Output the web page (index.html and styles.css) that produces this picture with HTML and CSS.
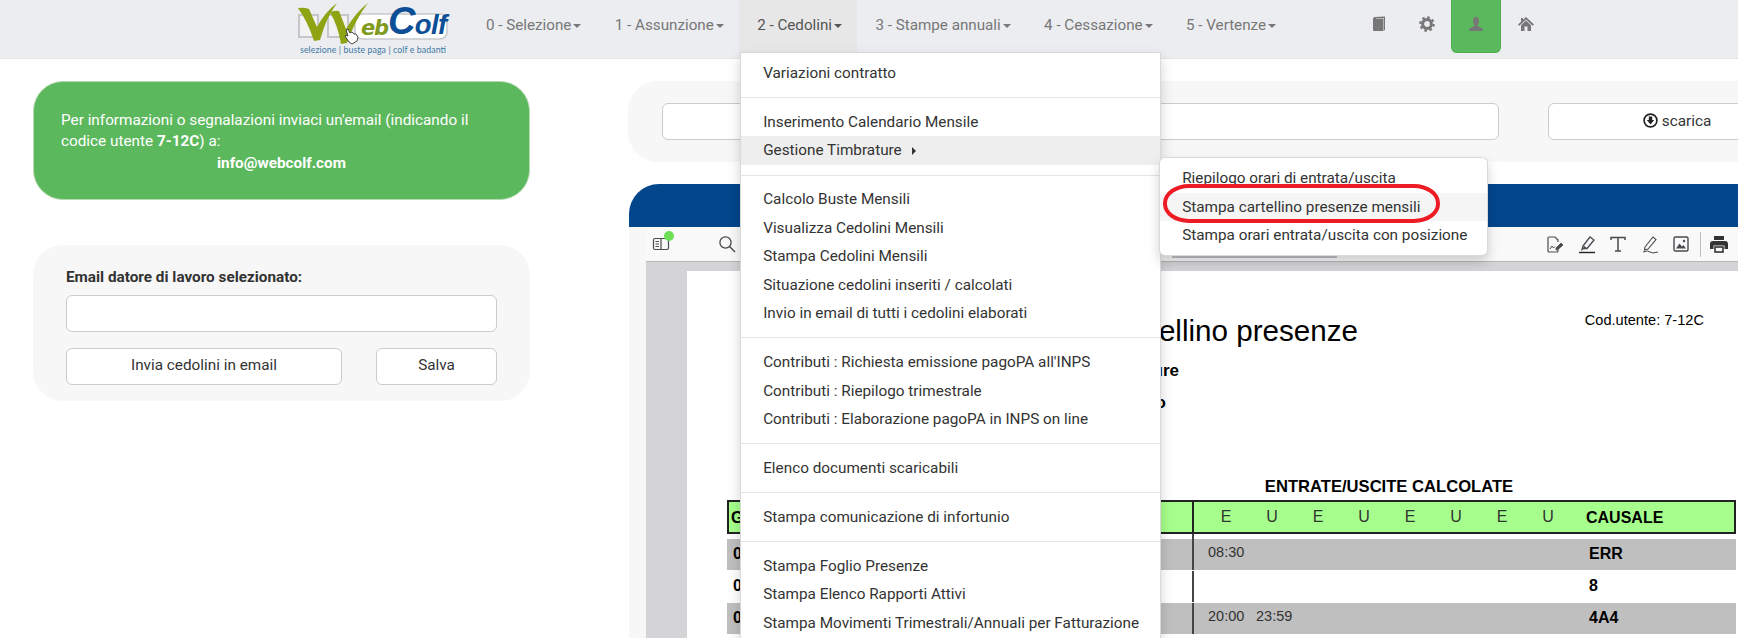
FILE: index.html
```html
<!DOCTYPE html>
<html lang="it">
<head>
<meta charset="utf-8">
<title>WebColf</title>
<link rel="stylesheet" href="styles.css">
</head>
<body>
<header class="topbar">
  <a class="logo" href="#">
    <svg class="logo-svg" width="166" height="58" viewBox="0 0 166 58">
      <rect x="9" y="15" width="19" height="22" fill="#f2f2f2" stroke="#c4c6c8" stroke-width="2"/>
      <rect x="38" y="15" width="20" height="22" fill="#f2f2f2" stroke="#c4c6c8" stroke-width="2"/>
      <rect x="65" y="14" width="92" height="25" rx="7" fill="#fff" stroke="#c8c9cc" stroke-width="1.5"/>
      <path d="M8 8 Q14 7 19 9 L27 27 Q35 12 47 3 Q36 18 30 40 L24 41 Q18 22 8 8Z" fill="#8ea414"/>
      <path d="M40 12 Q46 10 49 11 L56 29 Q66 12 78 3 Q66 18 57 43 L51 44 Q48 26 40 12Z" fill="#8ea414"/>
      <text class="logo-eb" x="71" y="35">eb</text>
      <text class="logo-colf" x="98" y="34"><tspan class="logo-c">C</tspan>olf</text>
      <path d="M56 30 L58 29 L60 33 L62 32 L64 34 L66 34 L68 37 L67 41 L62 44 L59 42 L55 36 L56 35 L58 36Z" fill="#fff" stroke="#333" stroke-width="0.9"/>
      <text class="logo-sub" x="10" y="53" textLength="146">selezione | buste paga | colf e badanti</text>
    </svg>
  </a>
  <ul class="menu-bar">
    <li class="menu-bar-item"><a class="menu-link" href="#">0 - Selezione<span class="caret"></span></a></li>
    <li class="menu-bar-item"><a class="menu-link" href="#">1 - Assunzione<span class="caret"></span></a></li>
    <li class="menu-bar-item is-open">
      <a class="menu-link" href="#">2 - Cedolini<span class="caret"></span></a>
      <ul class="dropdown">
        <li><a href="#">Variazioni contratto</a></li>
        <li class="divider"></li>
        <li><a href="#">Inserimento Calendario Mensile</a></li>
        <li class="has-sub is-hover">
          <a href="#">Gestione Timbrature<span class="caret-right"></span></a>
          <ul class="submenu">
            <li><a href="#">Riepilogo orari di entrata/uscita</a></li>
            <li class="is-hover-light"><a href="#">Stampa cartellino presenze mensili</a></li>
            <li><a href="#">Stampa orari entrata/uscita con posizione</a></li>
            <li class="ring" aria-hidden="true"></li>
          </ul>
        </li>
        <li class="divider"></li>
        <li><a href="#">Calcolo Buste Mensili</a></li>
        <li><a href="#">Visualizza Cedolini Mensili</a></li>
        <li><a href="#">Stampa Cedolini Mensili</a></li>
        <li><a href="#">Situazione cedolini inseriti / calcolati</a></li>
        <li><a href="#">Invio in email di tutti i cedolini elaborati</a></li>
        <li class="divider"></li>
        <li><a href="#">Contributi : Richiesta emissione pagoPA all'INPS</a></li>
        <li><a href="#">Contributi : Riepilogo trimestrale</a></li>
        <li><a href="#">Contributi : Elaborazione pagoPA in INPS on line</a></li>
        <li class="divider"></li>
        <li><a href="#">Elenco documenti scaricabili</a></li>
        <li class="divider"></li>
        <li><a href="#">Stampa comunicazione di infortunio</a></li>
        <li class="divider"></li>
        <li><a href="#">Stampa Foglio Presenze</a></li>
        <li><a href="#">Stampa Elenco Rapporti Attivi</a></li>
        <li><a href="#">Stampa Movimenti Trimestrali/Annuali per Fatturazione</a></li>
      </ul>
    </li>
    <li class="menu-bar-item"><a class="menu-link" href="#">3 - Stampe annuali<span class="caret"></span></a></li>
    <li class="menu-bar-item"><a class="menu-link" href="#">4 - Cessazione<span class="caret"></span></a></li>
    <li class="menu-bar-item"><a class="menu-link" href="#">5 - Vertenze<span class="caret"></span></a></li>
  </ul>
  <div class="top-icons">
    <a class="top-icon" href="#"><svg width="16" height="16" viewBox="0 0 16 16"><path d="M2 3 Q2 1 4 1 L14 .5 L14 14 L13 14.5 L13 2 L5 2 L5 15 L3 15 Q2 15 2 14Z M4.5 2.5 L12.5 2.5 L12.5 15 L4.5 15Z" fill="#777"/></svg></a>
    <a class="top-icon" href="#"><svg width="16" height="16" viewBox="0 0 16 16"><circle cx="8" cy="8" r="4.4" fill="none" stroke="#777" stroke-width="3"/><circle cx="8" cy="8" r="6.6" fill="none" stroke="#777" stroke-width="2.4" stroke-dasharray="2.6 2.58"/></svg></a>
    <a class="top-icon is-user" href="#"><svg width="16" height="16" viewBox="0 0 16 16"><path d="M8 1 C10.4 1 11.2 3 11 5.4 C10.9 7 10 8.4 9.6 9 C9.5 10 10.5 10.6 12 11.2 C14 12 15 12.8 15 15 L1 15 C1 12.8 2 12 4 11.2 C5.5 10.6 6.5 10 6.4 9 C6 8.4 5.1 7 5 5.4 C4.8 3 5.6 1 8 1Z" fill="#777"/></svg></a>
    <a class="top-icon" href="#"><svg width="16" height="16" viewBox="0 0 16 16"><path d="M8 1 L16 8.6 L14.6 9.8 L8 3.6 L1.4 9.8 L0 8.6 L3 5.7 L3 2 L5 2 L5 3.8Z M3 9.2 L8 4.6 L13 9.2 L13 15 L9.5 15 L9.5 10.5 L6.5 10.5 L6.5 15 L3 15Z" fill="#777"/></svg></a>
  </div>
</header>

<main class="layout">
  <aside class="side">
    <section class="notice">
      Per informazioni o segnalazioni inviaci un'email (indicando il codice utente <b>7-12C</b>) a:
      <b class="notice-mail">info@webcolf.com</b>
    </section>
    <section class="mail-card">
      <label class="mail-label" for="mail">Email datore di lavoro selezionato:</label>
      <input class="field" id="mail" type="text">
      <div class="mail-actions">
        <button class="btn btn-wide" type="button">Invia cedolini in email</button>
        <button class="btn btn-save" type="button">Salva</button>
      </div>
    </section>
  </aside>

  <section class="content">
    <div class="search-panel">
      <input class="field field-search" type="text">
      <button class="btn btn-download" type="button">
        <svg class="dl-icon" width="15" height="15" viewBox="0 0 15 15"><circle cx="7.5" cy="7.5" r="6.4" fill="none" stroke="#222" stroke-width="1.7"/><path d="M5.8 3.4 H9.2 V7 H11.2 L7.5 11.4 L3.8 7 H5.8Z" fill="#222"/></svg>scarica
      </button>
    </div>
    <div class="viewer">
      <div class="viewer-band"></div>
      <div class="viewer-body">
        <div class="toolbar">
          <span class="tool tool-sidebar">
            <svg width="20" height="20" viewBox="0 0 20 20"><rect x="2.5" y="4.5" width="15" height="11" rx="1.5" fill="none" stroke="#4a4a4f" stroke-width="1.2"/><path d="M10 4.5 V15.5 M4.5 7.5 H8 M4.5 10 H8 M4.5 12.5 H8" stroke="#4a4a4f" stroke-width="1.2"/></svg>
            <i class="tool-dot"></i>
          </span>
          <span class="tool tool-search">
            <svg width="20" height="20" viewBox="0 0 20 20"><circle cx="8.5" cy="8.5" r="5.6" fill="none" stroke="#4a4a4f" stroke-width="1.3"/><path d="M12.6 12.6 L18 18" stroke="#4a4a4f" stroke-width="1.4"/></svg>
          </span>
          <span class="tool-scroll"></span>
          <div class="tool-group">
            <span class="tool"><svg width="20" height="20" viewBox="0 0 20 20"><path d="M13 15.5 V17 Q13 18 12 18 H4 Q3 18 3 17 V4 Q3 3 4 3 H10 L13 6 V8" fill="none" stroke="#4a4a4f" stroke-width="1.2"/><path d="M5 15 L7 12 L8.5 14 L10 12.5" fill="none" stroke="#4a4a4f" stroke-width="1"/><path d="M11 14 L16 9 L18 11 L13 15.5 L11 16Z" fill="#4a4a4f" stroke="#4a4a4f" stroke-width=".8"/></svg></span>
            <span class="tool"><svg width="20" height="20" viewBox="0 0 20 20"><path d="M6 12 L13 3 L17 6 L10 14.5 L6.5 14.5 L5 15.5Z" fill="none" stroke="#4a4a4f" stroke-width="1.3"/><path d="M6.5 11.5 L10.5 14.5 L6.5 14.5Z" fill="#4a4a4f"/><path d="M2 18.5 H18" stroke="#222" stroke-width="1.4"/></svg></span>
            <span class="tool"><svg width="20" height="20" viewBox="0 0 20 20"><path d="M3 6 V3.5 H17 V6 M10 3.5 V17 M7 17 H13" fill="none" stroke="#4a4a4f" stroke-width="1.5"/></svg></span>
            <span class="tool"><svg width="20" height="20" viewBox="0 0 20 20"><path d="M5 13 L13 3 L16 5.5 L8 15 L4.5 16Z" fill="none" stroke="#4a4a4f" stroke-width="1.1"/><path d="M3 18 Q8 16 10 18 T18 18" fill="none" stroke="#4a4a4f" stroke-width="1"/></svg></span>
            <span class="tool"><svg width="20" height="20" viewBox="0 0 20 20"><rect x="3" y="3" width="14" height="14" rx="1.5" fill="none" stroke="#4a4a4f" stroke-width="1.4"/><path d="M5 14.5 L8.5 9.5 L11 12.5 L12.5 11 L15 14.5Z" fill="#4a4a4f"/><circle cx="13" cy="7" r="1.2" fill="#4a4a4f"/></svg></span>
            <i class="tool-sep"></i>
            <span class="tool"><svg width="20" height="20" viewBox="0 0 20 20"><path d="M5 2 H15 V6 H5Z" fill="#333"/><path d="M4 7 H16 Q19 7 19 10 V15 H15.5 V11.5 H4.5 V15 H1 V10 Q1 7 4 7Z" fill="#333"/><rect x="6" y="13" width="8" height="5" fill="none" stroke="#333" stroke-width="1.6"/></svg></span>
          </div>
        </div>
        <div class="pdf-area">
          <article class="pdf-page">
            <div class="doc-head">
              <h1 class="doc-title">Cartellino presenze</h1>
              <p class="doc-code">Cod.utente: 7-12C</p>
            </div>
            <p class="doc-line">Timbrature</p>
            <p class="doc-line doc-line-b">Periodo</p>
            <h2 class="doc-table-title">ENTRATE/USCITE CALCOLATE</h2>
            <div class="doc-row doc-row-head">
              <div class="cell-a">G</div>
              <div class="cell-times"><span>E</span><span>U</span><span>E</span><span>U</span><span>E</span><span>U</span><span>E</span><span>U</span></div>
              <div class="cell-c">CAUSALE</div>
            </div>
            <div class="doc-gap"></div>
            <div class="doc-row doc-row-grey">
              <div class="cell-a">01</div>
              <div class="cell-times is-values"><span>08:30</span></div>
              <div class="cell-c">ERR</div>
            </div>
            <div class="doc-row">
              <div class="cell-a">02</div>
              <div class="cell-times is-values"></div>
              <div class="cell-c">8</div>
            </div>
            <div class="doc-row doc-row-grey">
              <div class="cell-a">03</div>
              <div class="cell-times is-values"><span>20:00</span><span>23:59</span></div>
              <div class="cell-c">4A4</div>
            </div>
          </article>
        </div>
      </div>
    </div>
  </section>
</main>
</body>
</html>
```

FILE: styles.css
```css
* { box-sizing: border-box; }
html, body { margin: 0; padding: 0; height: 638px; overflow: hidden; background: #fff; }
body { font: 15.3px/21.4px Roboto, "Liberation Sans", sans-serif; color: #333; }
a { color: inherit; text-decoration: none; }
ul { list-style: none; margin: 0; padding: 0; }

/* top bar */
.topbar { display: flex; height: 59px; padding-left: 290px; background: #ecedf0; border-bottom: 1px solid #e4e4e6; position: relative; z-index: 5; }
.logo { display: block; width: 166px; height: 58px; flex: none; }
.logo-svg { display: block; }
.logo-eb { font: italic 700 21px "DejaVu Sans", sans-serif; fill: #7f9a1e; letter-spacing: -1.2px; }
.logo-colf { font: italic 700 27.5px "Liberation Sans", sans-serif; fill: #0c4f96; letter-spacing: -.6px; }
.logo-c { font-size: 38px; }
.logo-sub { font: 8.8px Lato, sans-serif; fill: #3f78a4; }
.menu-bar { display: flex; margin-left: 12px; }
.menu-bar-item { position: relative; }
.menu-link { display: block; height: 50px; padding: 15px 15.4px 0 18px; color: #777; font-size: 15.2px; white-space: nowrap; }
.is-open > .menu-link { height: 58px; background: #e7e7e7; color: #555; }
.caret { display: inline-block; margin-left: 2px; vertical-align: middle; border-top: 4px solid; border-left: 4px solid transparent; border-right: 4px solid transparent; }
.top-icons { display: flex; position: absolute; left: 1354px; top: 0; }
.top-icon { display: flex; justify-content: center; width: 49px; height: 53px; padding-top: 16px; }
.top-icon:nth-child(2) { width: 48px; }
.top-icon.is-user { width: 50px; background: #5cb85c; border: 1px solid #4cae4c; border-top: 0; border-radius: 0 0 6px 6px; }

/* dropdowns */
.dropdown, .submenu { position: absolute; background: #fff; border: 1px solid rgba(0,0,0,.15); box-shadow: 0 6px 12px rgba(0,0,0,.175); padding: 6px 0 5px; white-space: nowrap; color: #333; }
.dropdown { top: 52px; left: 1px; width: 421px; z-index: 10; }
.dropdown a { display: block; padding: 3px 22px; height: 28.5px; line-height: 22.5px; }
.divider { height: 1px; margin: 9.7px 0; background: #e5e5e5; }
.has-sub { position: relative; }
.is-hover > a { background: #eee; }
.caret-right { display: inline-block; margin-left: 10px; vertical-align: middle; border-left: 4px solid #333; border-top: 4px solid transparent; border-bottom: 4px solid transparent; }
.submenu { top: 21px; left: 418px; width: 329px; border-radius: 6px; z-index: 11; }
.is-hover-light a { background: #f5f5f5; }
.ring { position: absolute; left: 3px; top: 26px; width: 277px; height: 39px; border: 4px solid #ed1c24; border-radius: 26px / 19px; }

/* layout */
.layout { display: flex; align-items: flex-start; padding: 22px 0 0 33px; }
.side { flex: none; width: 497px; }
.notice { padding: 28px 27px 25px; background: #5cb85c; border: 1px solid #b6d9b2; border-radius: 30px; color: #fff; }
.notice-mail { display: block; text-align: center; }
.mail-card { margin-top: 45px; height: 156px; padding: 22px 33px; background: #f7f7f7; border-radius: 30px; }
.mail-label { display: block; margin-bottom: 6px; font-weight: 700; }
.field { display: block; height: 37px; background: #fff; border: 1px solid #ccc; border-radius: 6px; width: 100%; padding: 0 12px; font: inherit; }
.mail-actions { display: flex; justify-content: space-between; margin-top: 16px; }
.btn { height: 37px; background: #fff; border: 1px solid #ccc; border-radius: 6px; font: inherit; color: #333; padding: 0; }
.btn-wide { width: 276px; }
.btn-save { width: 121px; }

.content { flex: none; width: 1200px; margin-left: 98px; }
.search-panel { display: flex; align-items: center; height: 81px; padding-left: 34px; gap: 49px; background: #f7f7f7; border-radius: 30px; }
.field-search { width: 837px; flex: none; }
.btn-download { width: 258px; flex: none; }
.dl-icon { vertical-align: -2px; margin-right: 4px; }

.viewer { margin-top: 22px; }
.viewer-band { height: 43px; background: #03468c; border-radius: 30px 30px 0 0; margin-left: 1px; }
.viewer-body { margin-left: 1px; padding-left: 17px; background: #f7f7f7; }
.toolbar { display: flex; height: 35px; align-items: center; background: #f9f9fa; border-bottom: 1px solid #b8b8bb; padding-left: 5px; }
.tool { position: relative; display: block; width: 20px; height: 20px; flex: none; }
.tool svg { display: block; }
.tool-dot { position: absolute; left: 13px; top: -3px; width: 10px; height: 10px; border-radius: 50%; background: #6cdf57; }
.tool-search { margin-left: 46px; }
.tool-scroll { align-self: flex-end; flex: none; width: 165px; height: 5px; margin: 0 0 3px 435px; background: #c0c0c4; }
.tool-group { display: flex; align-items: center; gap: 11.5px; margin-left: 208px; }
.tool-sep { display: block; width: 1px; height: 25px; background: #bcbcbf; margin-left: -3px; }
.tool-sep + .tool { margin-left: -3px; }

.pdf-area { height: 400px; padding: 9px 0 0 41px; background: #d4d4d7; }
.pdf-page { height: 400px; padding-top: 37px; background: #fff; font-family: "Liberation Sans", Arial, sans-serif; color: #000; overflow: hidden; }
.doc-head { display: flex; align-items: flex-start; height: 38px; }
.doc-title { margin: 6px 0 0 416px; font-size: 29.6px; line-height: 34px; font-weight: 400; white-space: nowrap; }
.doc-code { margin: 0 124px 0 auto; font-size: 14.6px; line-height: 24px; }
.doc-line { width: 492px; margin: 14px 0 0; text-align: right; font-weight: 700; font-size: 17px; line-height: 22px; }
.doc-line-b { width: 479px; margin-top: 10px; }
.doc-table-title { width: 1404px; margin: 63px 0 3px; text-align: center; font-size: 16.6px; line-height: 20px; font-weight: 700; white-space: nowrap; }
.doc-row { display: flex; width: 1009px; height: 31px; margin: 0 0 1px 40px; font-size: 14.5px; line-height: 26px; color: #333; }
.doc-row-head { height: 34px; margin-bottom: 0; background: #a6ff8c; border: 2px solid #222; font-size: 16px; line-height: 29px; }
.doc-row-grey { background: #bfbfbf; }
.doc-gap { width: 467px; height: 5px; margin-left: 40px; border-right: 2px solid #444; }
.cell-a { flex: none; width: 467px; padding-left: 6px; font-size: 16px; font-weight: 700; color: #000; border-right: 2px solid #444; line-height: 29px; white-space: nowrap; }
.doc-row-head .cell-a { width: 465px; padding-left: 2px; border-right-color: #222; line-height: 31px; }
.cell-times { display: flex; flex: none; width: 377px; padding-left: 9px; }
.cell-times span { width: 46px; text-align: center; }
.cell-times.is-values { padding-left: 14px; gap: 12px; }
.cell-times.is-values span { width: 36px; }
.cell-c { padding-left: 18px; font-size: 16px; font-weight: 700; color: #000; line-height: 29px; }
.doc-row-head .cell-c { padding-left: 15px; line-height: 31px; color: #000; }
```
